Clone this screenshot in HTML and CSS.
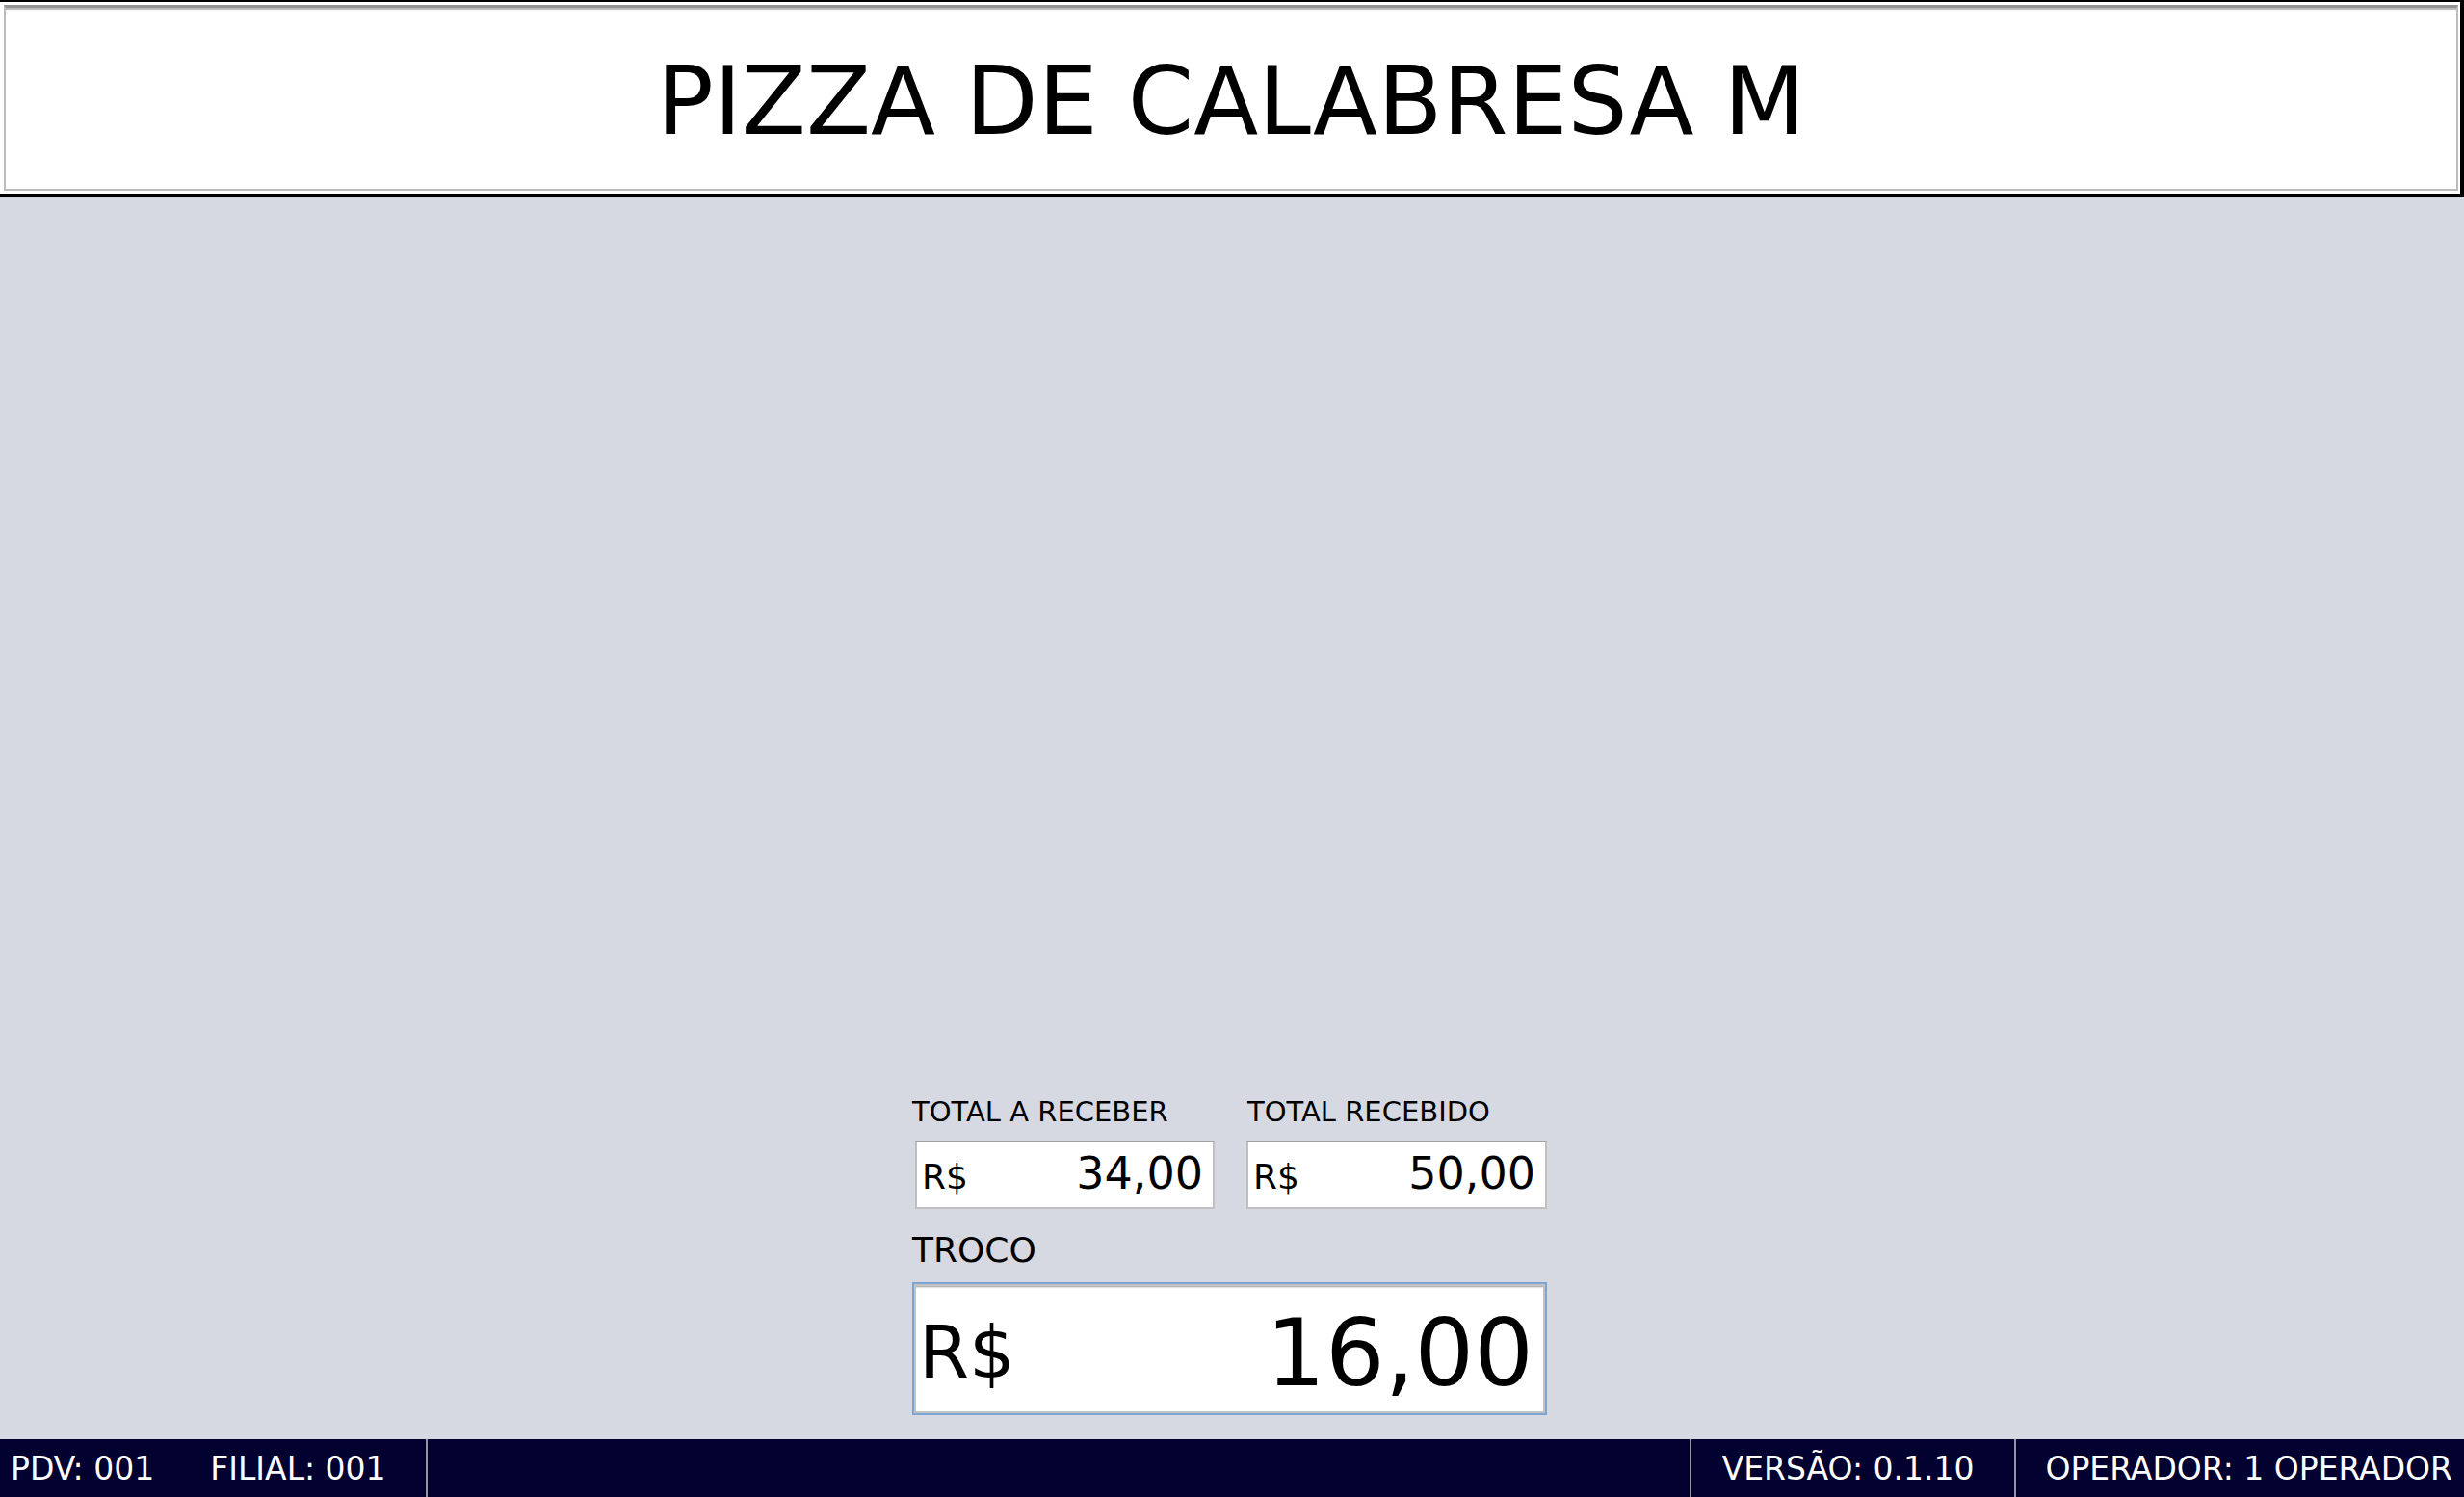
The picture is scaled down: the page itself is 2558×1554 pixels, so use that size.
FILE: index.html
```html
<!DOCTYPE html>
<html lang="pt-BR">
<head>
<meta charset="utf-8">
<title>PDV</title>
<link rel="stylesheet" href="styles.css">
</head>
<body>
<div class="app">
  <header class="header">
    <div class="header-inner">
      <h1 class="title">PIZZA DE CALABRESA M</h1>
    </div>
  </header>
  <main class="main">
    <section class="panel">
      <div class="totals">
        <div class="field">
          <div class="label">TOTAL A RECEBER</div>
          <div class="box box-first">
            <span class="cur">R$</span><span class="val">34,00</span>
          </div>
        </div>
        <div class="field">
          <div class="label label-second">TOTAL RECEBIDO</div>
          <div class="box">
            <span class="cur">R$</span><span class="val">50,00</span>
          </div>
        </div>
      </div>
      <div class="label label-troco">TROCO</div>
      <div class="troco-box">
        <span class="troco-cur">R$</span><span class="troco-val">16,00</span>
      </div>
    </section>
  </main>
  <footer class="footer">
    <div class="f-cell f-left"><span class="f-item">PDV: 001</span><span class="f-item">FILIAL: 001</span></div>
    <div class="f-spacer"></div>
    <div class="f-cell f-version">VERSÃO: 0.1.10</div>
    <div class="f-cell f-operator">OPERADOR: 1 OPERADOR</div>
  </footer>
</div>
</body>
</html>
```

FILE: styles.css
```css
* { box-sizing: border-box; }
html, body { margin: 0; padding: 0; }
body {
  font-family: "DejaVu Sans", Verdana, sans-serif;
  background: #d6d9e2;
  color: #000;
}
.app {
  display: flex;
  flex-direction: column;
  height: 100vh;
}
.header {
  height: 204px;
  background: #fff;
  border-top: 2px solid #000;
  border-right: 4px solid #000;
  border-bottom: 3px solid #000;
  padding: 3px 2px 3px 4px;
  flex: none;
}
.header-inner {
  height: 100%;
  border: 2px solid #bdbdbd;
  border-top: 3px solid #939393;
  box-shadow: inset 0 3px 1px -1px #b8b8b8;
  display: flex;
  align-items: center;
  justify-content: center;
}
.title {
  margin: 0;
  font-weight: normal;
  font-size: 98px;
  line-height: 98px;
  padding-top: 5px;
  white-space: nowrap;
}
.main {
  flex: 1;
  display: flex;
  flex-direction: column;
  justify-content: flex-end;
  align-items: center;
  padding: 0 5px 25px 0;
}
.panel {
  width: 659px;
}
.totals {
  display: grid;
  grid-template-columns: 314px 312px;
  column-gap: 33px;
}
.label {
  font-size: 29px;
  line-height: 28px;
  white-space: nowrap;
}
.label-second { padding-left: 1px; }
.box {
  margin-top: 16px;
  height: 71px;
  background: #fff;
  border: 2px solid #c0c0c0;
  border-top-color: #a0a0a0;
  display: flex;
  align-items: baseline;
  justify-content: space-between;
  padding: 9px 10px 0 5px;
}
.box-first { margin-left: 3px; }
.cur {
  font-size: 36px;
  line-height: 36px;
}
.val {
  font-size: 46px;
  line-height: 46px;
}
.label-troco {
  margin-top: 26px;
  font-size: 36px;
  line-height: 34px;
}
.troco-box {
  margin-top: 16px;
  height: 138px;
  background: #fff;
  border: 2px solid #7ba6d4;
  box-shadow: inset 0 0 0 2px #c2c2c2, inset 0 4px 2px -1px #9c9c9c;
  display: flex;
  align-items: center;
  justify-content: space-between;
  padding: 8px 12px 0 5px;
}
.troco-cur {
  font-size: 75px;
  line-height: 75px;
}
.troco-val {
  font-size: 97px;
  line-height: 97px;
}
.footer {
  flex: none;
  height: 60px;
  background: #03012f;
  color: #fff;
  display: flex;
  align-items: stretch;
  font-size: 33px;
  white-space: nowrap;
}
.f-cell {
  display: flex;
  align-items: center;
}
.f-left {
  width: 444px;
  padding-left: 11px;
  border-right: 2px solid #9494a2;
  gap: 58px;
}
.f-spacer { flex: 1; }
.f-version {
  border-left: 2px solid #9494a2;
  padding: 0 41px 0 32px;
}
.f-operator {
  border-left: 2px solid #9494a2;
  padding: 0 12px 0 31px;
}
```
